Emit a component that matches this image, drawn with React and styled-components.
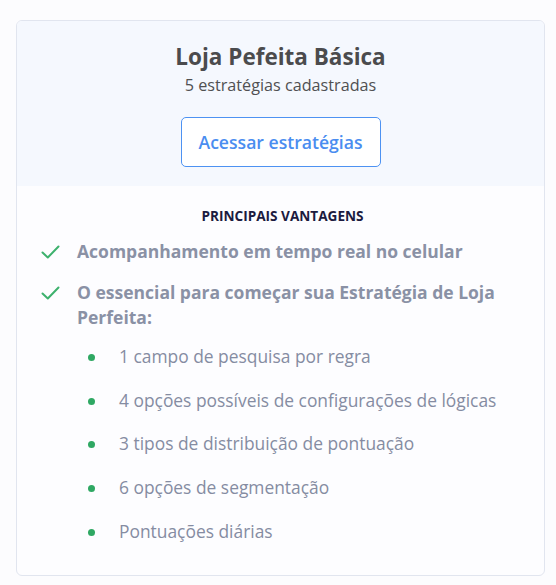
import React from "react";
import styled, { createGlobalStyle } from "styled-components";

const Global = createGlobalStyle`
  html, body { margin: 0; padding: 0; background: #fcfcfe; }
  body { font-family: "Open Sans", "Noto Sans", sans-serif; }
  * { box-sizing: border-box; }
`;

const Page = styled.div`
  padding: 20px 11px 9px 16px;
`;

const Card = styled.div`
  width: 529px;
  border: 1px solid #e1e5ef;
  border-radius: 6px;
  overflow: hidden;
  background: #fdfdff;
`;

const Header = styled.div`
  background: #f5f8fe;
  display: flex;
  flex-direction: column;
  align-items: center;
  padding: 21px 20px 19px;
`;

const Title = styled.h2`
  margin: 0;
  font-size: 22.5px;
  line-height: 30px;
  font-weight: 700;
  color: #4b4b4d;
`;

const Subtitle = styled.p`
  margin: 2px 0 0;
  font-size: 16.2px;
  line-height: 22px;
  color: #505052;
`;

const OutlineButton = styled.button`
  margin-top: 21px;
  width: 200px;
  height: 50px;
  border: 1px solid #4d92f2;
  border-radius: 5px;
  background: #ffffff;
  color: #4a8df0;
  font-family: "Open Sans", sans-serif;
  font-size: 17.6px;
  font-weight: 600;
  cursor: pointer;
`;

const Body = styled.div`
  padding: 21px 20px 33px 24px;
`;

const SectionTitle = styled.h3`
  margin: 0;
  text-align: center;
  font-size: 13.6px;
  line-height: 18px;
  font-weight: 700;
  color: #1c1b40;
`;

const CheckList = styled.ul`
  list-style: none;
  margin: 14px 0 0;
  padding: 0;
  display: flex;
  flex-direction: column;
  gap: 16px;
`;

const CheckItem = styled.li`
  display: flex;
  align-items: flex-start;
  gap: 17px;
  font-size: 17.5px;
  line-height: 25px;
  font-weight: 700;
  color: #8a91a5;
`;

const CheckIcon = styled.svg`
  flex: none;
  width: 19px;
  height: 14px;
  margin-top: 6px;
`;

const SubList = styled.ul`
  list-style: none;
  margin: 15px 0 0;
  padding: 0 0 0 47px;
  display: flex;
  flex-direction: column;
  gap: 21.7px;
`;

const SubItem = styled.li`
  display: flex;
  align-items: center;
  gap: 24px;
  font-size: 17.4px;
  line-height: 22px;
  font-weight: 400;
  color: #858ca2;
`;

const Dot = styled.span`
  flex: none;
  width: 7px;
  height: 7px;
  margin-top: 3px;
  border-radius: 50%;
  background: #2fa863;
`;

const Check = () => (
  <CheckIcon viewBox="0 0 19 14">
    <path d="M1.5 7.5 L6.8 12.5 L17.5 1.5" fill="none" stroke="#3db16d" strokeWidth="2" strokeLinecap="round" strokeLinejoin="round" />
  </CheckIcon>
);

const subs = [
  "1 campo de pesquisa por regra",
  "4 opções possíveis de configurações de lógicas",
  "3 tipos de distribuição de pontuação",
  "6 opções de segmentação",
  "Pontuações diárias",
];

export default function App() {
  return (
    <Page>
      <Global />
      <Card>
        <Header>
          <Title>Loja Pefeita Básica</Title>
          <Subtitle>5 estratégias cadastradas</Subtitle>
          <OutlineButton>Acessar estratégias</OutlineButton>
        </Header>
        <Body>
          <SectionTitle>PRINCIPAIS VANTAGENS</SectionTitle>
          <CheckList>
            <CheckItem>
              <Check />
              <span>Acompanhamento em tempo real no celular</span>
            </CheckItem>
            <CheckItem>
              <Check />
              <span>O essencial para começar sua Estratégia de Loja Perfeita:</span>
            </CheckItem>
          </CheckList>
          <SubList>
            {subs.map((s) => (
              <SubItem key={s}>
                <Dot />
                <span>{s}</span>
              </SubItem>
            ))}
          </SubList>
        </Body>
      </Card>
    </Page>
  );
}
